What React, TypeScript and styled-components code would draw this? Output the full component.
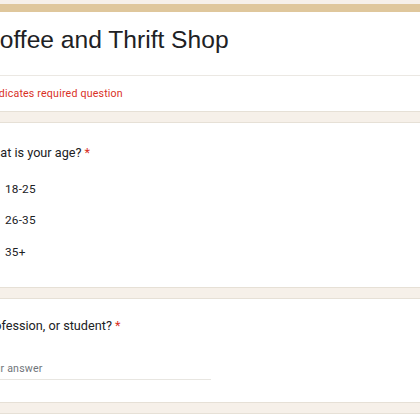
import React from "react";
import styled, { createGlobalStyle } from "styled-components";

const Global = createGlobalStyle`
  html, body {
    margin: 0;
    padding: 0;
    background: #f6f0e9;
    overflow: hidden;
  }
  body {
    font-family: Roboto, "Liberation Sans", Arial, sans-serif;
    color: #202124;
  }
`;

const Page = styled.div`
  width: 500px;
  margin-left: -39px;
  padding-top: 4px;
  display: flex;
  flex-direction: column;
  gap: 10px;
`;

const Card = styled.section<{ $pt: number; $pb: number }>`
  background: #ffffff;
  border: 1px solid #e6e0d6;
  border-radius: 8px;
  padding: ${(p) => `${p.$pt}px 20px ${p.$pb}px 20px`};
`;

const HeaderCard = styled.section`
  background: #ffffff;
  border: 1px solid #e6e0d6;
  border-top: none;
  border-radius: 8px;
  overflow: hidden;
`;

const TopBar = styled.div`
  height: 8px;
  background: #dfc79c;
`;

const TitleArea = styled.div`
  padding: 11px 20px 0 20px;
  height: 52px;
  border-bottom: 1px solid #ebe8e3;
`;

const Title = styled.h1`
  margin: 0;
  font-family: "Liberation Sans", Arial, sans-serif;
  font-weight: 400;
  font-size: 24.6px;
  line-height: 34px;
  color: #202124;
`;

const RequiredNote = styled.div`
  padding: 10px 20px 9px 20px;
  font-size: 10.6px;
  line-height: 16px;
  letter-spacing: 0.2px;
  color: #d93025;
`;

const Question = styled.div`
  font-size: 12.7px;
  line-height: 20px;
  color: #202124;
`;

const Star = styled.span`
  color: #d93025;
  margin-left: 3px;
`;

const Options = styled.div`
  margin-top: 10px;
  display: flex;
  flex-direction: column;
`;

const OptionRow = styled.label`
  display: flex;
  align-items: center;
  height: 31.5px;
  font-size: 11.8px;
  letter-spacing: 0.2px;
  color: #202124;
`;

const Radio = styled.span`
  box-sizing: border-box;
  width: 16px;
  height: 16px;
  border: 2px solid #5f6368;
  border-radius: 50%;
  margin-right: 7px;
  flex: none;
`;

const AnswerLine = styled.div`
  margin-top: 23px;
  width: 229px;
  font-size: 10.6px;
  line-height: 20px;
  letter-spacing: 0.2px;
  color: #70757a;
  border-bottom: 1px solid #e8e6e1;
`;

export default function App() {
  return (
    <>
      <Global />
      <Page>
        <HeaderCard>
          <TopBar />
          <TitleArea>
            <Title>Coffee and Thrift Shop</Title>
          </TitleArea>
          <RequiredNote>* Indicates required question</RequiredNote>
        </HeaderCard>

        <Card $pt={20} $pb={19}>
          <Question>
            What is your age?<Star>*</Star>
          </Question>
          <Options>
            {["18-25", "26-35", "35+"].map((o) => (
              <OptionRow key={o}>
                <Radio />
                {o}
              </OptionRow>
            ))}
          </Options>
        </Card>

        <Card $pt={17} $pb={22}>
          <Question>
            Profession, or student?<Star>*</Star>
          </Question>
          <AnswerLine>Your answer</AnswerLine>
        </Card>

        <Card $pt={17} $pb={40}>
          <Question>
            Which do you visit us for?<Star>*</Star>
          </Question>
        </Card>
      </Page>
    </>
  );
}
